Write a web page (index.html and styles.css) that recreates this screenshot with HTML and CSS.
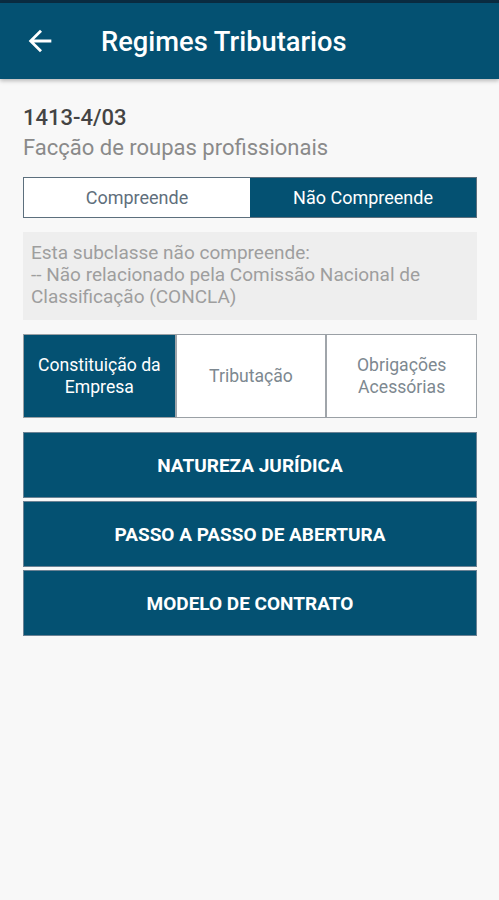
FILE: index.html
```html
<!DOCTYPE html>
<html lang="pt">
<head>
<meta charset="utf-8">
<link rel="stylesheet" href="styles.css">
</head>
<body>
<div class="statusbar"></div>
<header class="appbar">
  <svg class="back" width="34" height="34" viewBox="0 0 24 24"><path d="M20 11H7.83l5.59-5.59L12 4l-8 8 8 8 1.41-1.41L7.83 13H20v-2z" fill="#fff"/></svg>
  <h1 class="title">Regimes Tributarios</h1>
</header>
<main class="content">
  <div class="code">1413-4/03</div>
  <div class="desc">Facção de roupas profissionais</div>
  <div class="toggle">
    <div class="toggle-item">Compreende</div>
    <div class="toggle-item active">Não Compreende</div>
  </div>
  <div class="note">Esta subclasse não compreende:<br>-- Não relacionado pela Comissão Nacional de Classificação (CONCLA)</div>
  <div class="tabs">
    <div class="tab active">Constituição da Empresa</div>
    <div class="tab">Tributação</div>
    <div class="tab">Obrigações Acessórias</div>
  </div>
  <div class="buttons">
    <div class="btn">NATUREZA JURÍDICA</div>
    <div class="btn">PASSO A PASSO DE ABERTURA</div>
    <div class="btn">MODELO DE CONTRATO</div>
  </div>
</main>
</body>
</html>
```
FILE: styles.css
```css
* { box-sizing: border-box; }
html, body { margin: 0; padding: 0; }
body {
  background: #f8f8f8;
  font-family: Roboto, "Liberation Sans", sans-serif;
  width: 499px;
  height: 900px;
  overflow: hidden;
}
.statusbar { height: 3px; background: #0b2c41; }
.appbar {
  height: 76px;
  background: #045172;
  display: flex;
  align-items: center;
  padding-left: 23px;
  box-shadow: 0 2px 4px rgba(0,0,0,0.25);
}
.back { width: 34px; height: 34px; flex-shrink: 0; }
.title {
  margin: 2px 0 0 44px;
  color: #fff;
  font-size: 27.3px;
  font-weight: 500;
}
.content { padding: 24px 22px 0 23px; }
.code {
  font-size: 22px;
  font-weight: 500;
  color: #444;
  line-height: 30px;
}
.desc {
  font-size: 22px;
  color: #8a8a8a;
  line-height: 30px;
}
.toggle {
  margin-top: 14px;
  display: flex;
  height: 41px;
  border: 1px solid #5c6f7d;
}
.toggle-item {
  flex: 1;
  display: flex;
  align-items: center;
  justify-content: center;
  background: #fff;
  color: #5f6f7c;
  font-size: 18px;
}
.toggle-item.active { background: #045172; color: #fff; }
.note {
  margin-top: 14px;
  background: #eeeeee;
  color: #9e9e9e;
  font-size: 19px;
  line-height: 22px;
  padding: 10px 8px 10px 8px;
  height: 88px;
}
.tabs {
  margin-top: 14px;
  display: grid;
  grid-template-columns: 1fr 1fr 1fr;
  height: 84px;
  border: 1px solid #9aa0a5;
  background: #fff;
}
.tab {
  display: flex;
  align-items: center;
  justify-content: center;
  text-align: center;
  padding: 0 6px;
  font-size: 17.6px;
  line-height: 22px;
  color: #7d8890;
  border-left: 2px solid #a0a5aa;
}
.tab:first-child { border-left: none; }
.tab.active { background: #045172; color: #fff; }
.buttons {
  margin-top: 14px;
  display: flex;
  flex-direction: column;
  gap: 3px;
}
.btn {
  height: 66px;
  background: #045172;
  border: 1px solid #6b8294;
  color: #fff;
  font-size: 19px;
  font-weight: 700;
  display: flex;
  align-items: center;
  justify-content: center;
}
```
